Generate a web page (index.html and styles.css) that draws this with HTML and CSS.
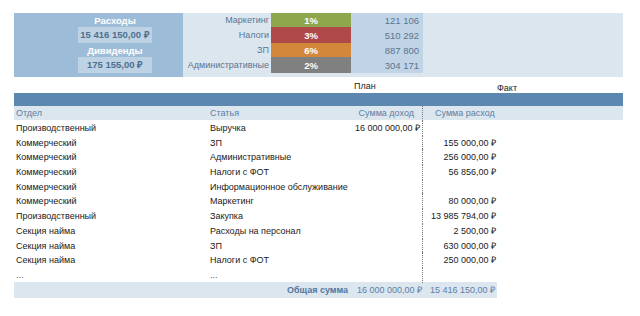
FILE: index.html
```html
<!DOCTYPE html>
<html>
<head>
<meta charset="utf-8">
<link rel="stylesheet" href="styles.css">
</head>
<body>
<div class="page">
  <div class="summary">
    <div class="totals">
      <div class="t-label">Расходы</div>
      <div class="t-value">15 416 150,00 ₽</div>
      <div class="t-label">Дивиденды</div>
      <div class="t-value">175 155,00 ₽</div>
    </div>
    <div class="breakdown">
      <div class="b-row r1"><span class="b-name">Маркетинг</span><span class="b-pct green">1%</span><span class="b-num">121 106</span></div>
      <div class="b-row r2"><span class="b-name">Налоги</span><span class="b-pct red">3%</span><span class="b-num">510 292</span></div>
      <div class="b-row r1"><span class="b-name">ЗП</span><span class="b-pct orange">6%</span><span class="b-num">887 800</span></div>
      <div class="b-row r2"><span class="b-name">Административные</span><span class="b-pct gray">2%</span><span class="b-num">304 171</span></div>
    </div>
  </div>

  <div class="groups">
    <span class="g-plan">План</span>
    <span class="g-fact">Факт</span>
  </div>
  <div class="bluebar"></div>
  <div class="row head">
    <div class="c1">Отдел</div>
    <div class="c2">Статья</div>
    <div class="c3">Сумма доход</div>
    <div class="c4">Сумма расход</div>
  </div>
  <div class="row"><div class="c1">Производственный</div><div class="c2">Выручка</div><div class="c3">16 000 000,00 ₽</div><div class="c4"></div></div>
  <div class="row"><div class="c1">Коммерческий</div><div class="c2">ЗП</div><div class="c3"></div><div class="c4">155 000,00 ₽</div></div>
  <div class="row"><div class="c1">Коммерческий</div><div class="c2">Административные</div><div class="c3"></div><div class="c4">256 000,00 ₽</div></div>
  <div class="row"><div class="c1">Коммерческий</div><div class="c2">Налоги с ФОТ</div><div class="c3"></div><div class="c4">56 856,00 ₽</div></div>
  <div class="row"><div class="c1">Коммерческий</div><div class="c2">Информационное обслуживание</div><div class="c3"></div><div class="c4"></div></div>
  <div class="row"><div class="c1">Коммерческий</div><div class="c2">Маркетинг</div><div class="c3"></div><div class="c4">80 000,00 ₽</div></div>
  <div class="row"><div class="c1">Производственный</div><div class="c2">Закупка</div><div class="c3"></div><div class="c4">13 985 794,00 ₽</div></div>
  <div class="row"><div class="c1">Секция найма</div><div class="c2">Расходы на персонал</div><div class="c3"></div><div class="c4">2 500,00 ₽</div></div>
  <div class="row"><div class="c1">Секция найма</div><div class="c2">ЗП</div><div class="c3"></div><div class="c4">630 000,00 ₽</div></div>
  <div class="row"><div class="c1">Секция найма</div><div class="c2">Налоги с ФОТ</div><div class="c3"></div><div class="c4">250 000,00 ₽</div></div>
  <div class="row"><div class="c1 dots">...</div><div class="c2 dots">...</div><div class="c3"></div><div class="c4"></div></div>
  <div class="row total">
    <div class="tot-label">Общая сумма</div>
    <div class="c3">16 000 000,00 ₽</div>
    <div class="c4">15 416 150,00 ₽</div>
  </div>
</div>
</body>
</html>
```

FILE: styles.css
```css
* { box-sizing: border-box; }
body {
  margin: 0;
  font-family: "Liberation Sans", Arial, sans-serif;
  font-size: 9px;
  color: #1a1a1a;
  background: #fff;
}
.page {
  padding: 13px 0 0 14px;
  width: 623px;
}
.summary {
  display: flex;
  height: 64px;
}
.totals {
  width: 169px;
  background: #9dbcd7;
  padding-left: 64px;
  display: grid;
  grid-template-rows: 14px 16px 14px 16px;
  grid-template-columns: 74px;
}
.t-label {
  color: #fff;
  font-weight: bold;
  text-align: center;
  line-height: 15px;
  font-size: 9.5px;
}
.t-value {
  background: #bdd2e4;
  color: #4f6f8e;
  font-weight: bold;
  text-align: center;
  line-height: 16px;
  font-size: 9.5px;
}
.breakdown {
  flex: 1;
  background: #dbe6ef;
  padding-bottom: 4px;
}
.b-row {
  display: flex;
  height: 14px;
  line-height: 15px;
}
.b-row.r2 { height: 16px; line-height: 17px; }
.b-name {
  width: 88px;
  text-align: right;
  padding-right: 2px;
  color: #5b7490;
}
.b-pct {
  width: 80px;
  text-align: center;
  color: #fff;
  font-weight: bold;
  font-size: 9.5px;
}
.green { background: #8fa74c; }
.red { background: #b0494a; }
.orange { background: #d3873b; }
.gray { background: #808080; }
.b-num {
  width: 72px;
  background: #c0d4e5;
  text-align: right;
  padding-right: 4px;
  color: #5b7490;
  font-size: 9.5px;
}
.groups {
  position: relative;
  height: 16px;
}
.g-plan {
  position: absolute;
  left: 340px;
  top: 4px;
}
.g-fact {
  position: absolute;
  left: 483px;
  top: 6px;
}
.bluebar {
  height: 13px;
  background: #5c88af;
}
.row {
  display: grid;
  grid-template-columns: 194px 114px 100px 75px 126px;
  height: 14.7px;
  line-height: 16px;
  white-space: nowrap;
}
.c1 { padding-left: 2px; }
.c2 { padding-left: 2px; overflow: visible; }
.c3 { text-align: right; padding-right: 2px; }
.c4 {
  text-align: right;
  padding-right: 1px;
  border-left: 1px dotted #777;
}
.head {
  background: #dbe6ef;
  color: #5b7fa5;
  height: 14px;
  line-height: 15px;
}
.head .c3 { padding-right: 8px; }
.head .c4 { text-align: left; padding-left: 12px; }
.dots { color: #555; }
.total {
  height: 16px;
  line-height: 17px;
  grid-template-columns: 334px 74px 75px;
  width: 483px;
  background: #dbe6ef;
  color: #5b80a5;
  margin-top: 0.3px;
}
.tot-label {
  text-align: right;
  font-weight: bold;
  color: #5276a0;
}
.total .c3 { padding-right: 0; }
.total .c4 { border-left: none; padding-right: 2px; }
```
